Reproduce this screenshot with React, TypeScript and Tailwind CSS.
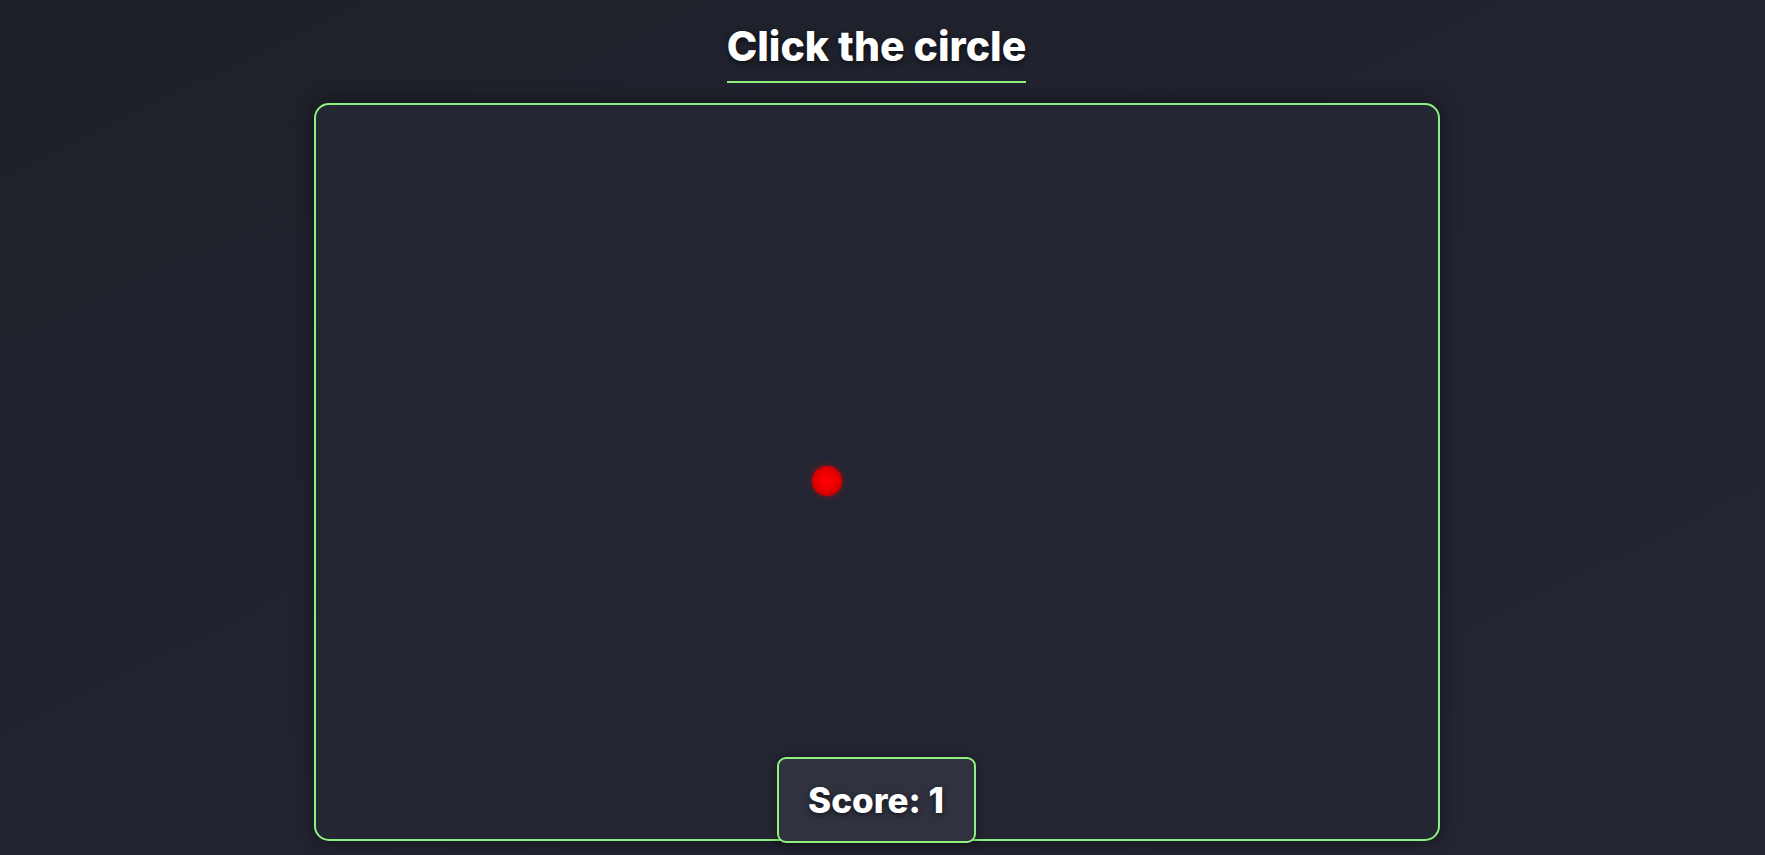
import React from "react";

export default function App() {
  return (
    <div className="w-[1765px] h-[855px] overflow-hidden bg-gradient-to-br from-[#1e2029] via-[#212330] to-[#242633]">
      <div
        className="w-[1753px] flex flex-col items-center"
        style={{ fontFamily: "Inter, 'Noto Sans', sans-serif" }}
      >
        <h1 className="mt-[22px] text-[41px] leading-[49px] font-extrabold text-white tracking-[0px] border-b-2 border-[#8ef07e] pb-[10px] [text-shadow:0_2px_6px_rgba(0,0,0,0.6)]">
          Click the circle
        </h1>
        <div className="relative mt-[20px] w-[1126px] h-[738px] rounded-[15px] border-2 border-[#8ef07e] bg-[#242633] shadow-[0_0_20px_rgba(0,0,0,0.45)]">
          <div className="absolute left-[496px] top-[361px] w-[30px] h-[30px] rounded-full bg-[#ff0000] shadow-[inset_0_0_12px_rgba(140,0,0,0.8),0_0_6px_rgba(255,0,0,0.5)]" />
          <div className="absolute left-[461px] top-[652px] w-[199px] h-[86px] rounded-[9px] border-2 border-[#8ef07e] bg-[#30323f] flex items-center justify-center shadow-[0_0_12px_rgba(0,0,0,0.4)]">
            <span className="text-[35px] font-extrabold text-white [text-shadow:0_2px_6px_rgba(0,0,0,0.6)]">
              Score: 1
            </span>
          </div>
        </div>
      </div>
    </div>
  );
}
